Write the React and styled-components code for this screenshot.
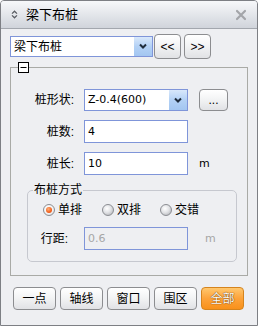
import React from 'react';
import styled, { createGlobalStyle, css } from 'styled-components';

const Global = createGlobalStyle`
  html, body { margin: 0; padding: 0; background: #ffffff; }
  body {
    font-family: "Liberation Sans", "Noto Sans CJK SC", sans-serif;
    font-size: 12px;
    color: #000;
  }
  * { box-sizing: border-box; }
`;

const Window = styled.div`
  width: 258px;
  height: 326px;
  border: 1px solid #7d7f84;
  border-radius: 4px 4px 0 0;
  background: #eeeff2;
  display: flex;
  flex-direction: column;
  overflow: hidden;
`;

const TitleBar = styled.div`
  height: 28px;
  flex: none;
  display: flex;
  align-items: center;
  padding: 0 0 0 10px;
  background: linear-gradient(#f7f8fa, #d0d4db);
  border-bottom: 1px solid #a3a7ae;
`;

const Title = styled.span`
  margin-left: 8px;
  font-size: 13px;
  line-height: 16px;
  flex: 1;
`;

const CloseBox = styled.div`
  width: 12px;
  height: 12px;
  margin-right: 10px;
  display: flex;
`;

const Body = styled.div`
  flex: 1;
  display: flex;
  flex-direction: column;
  padding-top: 5px;
`;

const TopRow = styled.div`
  display: flex;
  align-items: center;
  height: 25px;
  padding-left: 9px;
`;

const SelectBox = styled.div`
  width: ${p => p.$w}px;
  height: ${p => p.$h}px;
  border: 1px solid #7f95d9;
  background: #fff;
  display: flex;
  align-items: center;
`;

const SelectText = styled.span`
  flex: 1;
  padding-left: ${p => p.$pad || 3}px;
  font-family: ${p => p.$latin ? '"DejaVu Sans", "Noto Sans CJK SC", sans-serif' : 'inherit'};
  font-size: ${p => p.$latin ? 11 : 12}px;
  line-height: 14px;
  white-space: nowrap;
`;

const DropBtn = styled.div`
  width: 18px;
  align-self: stretch;
  background: linear-gradient(#d9e8fb, #b3d1f5 50%, #a3c6f1);
  display: flex;
  align-items: center;
  justify-content: center;
`;

const RoundBtn = styled.button`
  margin: 0;
  padding: 0;
  width: ${p => p.$w}px;
  height: ${p => p.$h}px;
  margin-left: ${p => p.$ml || 0}px;
  border: 1px solid #8c8d90;
  border-radius: 4px;
  background: linear-gradient(#ffffff, #f3f4f5 45%, #e1e2e5);
  font-family: "Liberation Sans", "Noto Sans CJK SC", sans-serif;
  font-size: 12px;
  line-height: 14px;
  color: #000;
  display: flex;
  align-items: center;
  justify-content: center;
  ${p => p.$accent && css`
    border-color: #d5841e;
    background: linear-gradient(#ffc76e, #fda33a 50%, #f8911b);
    color: #fff;
    text-shadow: 0 0 1px #6a3a00, 0 0 1px #6a3a00;
  `}
`;

const Group = styled.fieldset`
  margin: 3px 9px 0 9px;
  padding: 0 0 13px 0;
  border: 1px solid #a9aaa6;
  min-width: 0;
`;

const CollapseLegend = styled.legend`
  margin-left: 7px;
  padding: 0;
  width: 11px;
  height: 11px;
  display: flex;
`;

const FormGrid = styled.div`
  display: grid;
  grid-template-columns: 63px 104px auto;
  column-gap: 10px;
  row-gap: 9px;
  align-items: center;
  margin-top: 16px;
`;

const Label = styled.span`
  text-align: right;
  line-height: 14px;
  white-space: nowrap;
`;

const TextInput = styled.div`
  height: 23px;
  border: 1px solid #7f95d9;
  background: ${p => p.$disabled ? '#eeeff2' : '#fff'};
  color: ${p => p.$disabled ? '#a6a6a6' : '#000'};
  display: flex;
  align-items: center;
  padding-left: 3px;
  font-family: "DejaVu Sans", "Noto Sans CJK SC", sans-serif;
  font-size: 11px;
  line-height: 14px;
`;

const Unit = styled.span`
  margin-left: 1px;
  font-family: "DejaVu Sans", sans-serif;
  font-size: 11px;
  color: ${p => p.$disabled ? '#a6a6a6' : '#000'};
`;

const InnerGroup = styled.fieldset`
  margin: 9px 10px 0 16px;
  padding: 0 0 11px 0;
  border: 1px solid #c6c8cf;
  border-radius: 5px;
  min-width: 0;
`;

const InnerLegend = styled.legend`
  margin-left: 5px;
  padding: 0 1px;
  line-height: 12px;
  font-size: 12px;
`;

const RadioRow = styled.div`
  display: flex;
  align-items: center;
  padding-left: 15px;
  margin-top: 7px;
  height: 14px;
`;

const RadioItem = styled.label`
  display: flex;
  align-items: center;
  gap: 3px;
  width: ${p => p.$w}px;
  line-height: 14px;
`;

const Dot = styled.span`
  width: 12px;
  height: 12px;
  border-radius: 50%;
  border: 1px solid #8b8d92;
  background: radial-gradient(circle at 40% 35%, #ffffff, #e2e3e6 45%, #a9abb0);
  display: flex;
  align-items: center;
  justify-content: center;
  flex: none;
  ${p => p.$on && css`
    background: radial-gradient(circle at 40% 35%, #ffffff, #f0f0f0 60%, #c9cacd);
    &::after {
      content: "";
      width: 6px;
      height: 6px;
      border-radius: 50%;
      background: radial-gradient(circle at 40% 35%, #ffb07a, #f2601c 60%, #d8400c);
    }
  `}
`;

const SpaceRow = styled.div`
  display: grid;
  grid-template-columns: 29px 104px auto;
  column-gap: 16px;
  align-items: center;
  margin-top: 10px;
  padding-left: 11px;
`;

const BottomBar = styled.div`
  display: flex;
  gap: 4px;
  padding-left: 12px;
  margin-top: 11px;
`;

const Chevron = () => (
  <svg width="10" height="7" viewBox="0 0 10 7">
    <path d="M2 1.5 L5 4.5 L8 1.5" fill="none" stroke="#1f2c3c" strokeWidth="2" />
  </svg>
);

const UpDownIcon = () => (
  <svg width="7" height="9" viewBox="0 0 7 9">
    <path d="M1 3.6 L3.5 1.2 L6 3.6 M1 5.4 L3.5 7.8 L6 5.4" fill="none" stroke="#5a5d63" strokeWidth="1.3" />
  </svg>
);

const CloseIcon = () => (
  <svg width="12" height="12" viewBox="0 0 12 12">
    <path d="M2 2 L10 10 M10 2 L2 10" stroke="#a3a5a9" strokeWidth="2.2" strokeLinecap="round" />
  </svg>
);

const CollapseIcon = () => (
  <svg width="11" height="11" viewBox="0 0 11 11">
    <rect x="0.5" y="0.5" width="10" height="10" fill="#fff" stroke="#000" />
    <path d="M2.5 5.5 H8.5" stroke="#000" />
  </svg>
);

export default function App() {
  return (
    <>
      <Global />
      <Window>
        <TitleBar>
          <UpDownIcon />
          <Title>梁下布桩</Title>
          <CloseBox><CloseIcon /></CloseBox>
        </TitleBar>
        <Body>
          <TopRow>
            <SelectBox $w={143} $h={21}>
              <SelectText>梁下布桩</SelectText>
              <DropBtn><Chevron /></DropBtn>
            </SelectBox>
            <RoundBtn $w={27} $h={25} $ml={1}>&lt;&lt;</RoundBtn>
            <RoundBtn $w={27} $h={25} $ml={3}>&gt;&gt;</RoundBtn>
          </TopRow>
          <Group>
            <CollapseLegend><CollapseIcon /></CollapseLegend>
            <FormGrid>
              <Label>桩形状:</Label>
              <SelectBox $w={104} $h={22}>
                <SelectText $latin>Z-0.4(600)</SelectText>
                <DropBtn><Chevron /></DropBtn>
              </SelectBox>
              <RoundBtn $w={29} $h={22} $ml={1}>...</RoundBtn>
              <Label>桩数:</Label>
              <TextInput>4</TextInput>
              <span />
              <Label>桩长:</Label>
              <TextInput>10</TextInput>
              <Unit>m</Unit>
            </FormGrid>
            <InnerGroup>
              <InnerLegend>布桩方式</InnerLegend>
              <RadioRow>
                <RadioItem $w={59}><Dot $on />单排</RadioItem>
                <RadioItem $w={58}><Dot />双排</RadioItem>
                <RadioItem $w={50}><Dot />交错</RadioItem>
              </RadioRow>
              <SpaceRow>
                <Label>行距:</Label>
                <TextInput $disabled>0.6</TextInput>
                <Unit $disabled>m</Unit>
              </SpaceRow>
            </InnerGroup>
          </Group>
          <BottomBar>
            <RoundBtn $w={43} $h={23}>一点</RoundBtn>
            <RoundBtn $w={43} $h={23}>轴线</RoundBtn>
            <RoundBtn $w={43} $h={23}>窗口</RoundBtn>
            <RoundBtn $w={43} $h={23}>围区</RoundBtn>
            <RoundBtn $w={43} $h={23} $accent>全部</RoundBtn>
          </BottomBar>
        </Body>
      </Window>
    </>
  );
}
